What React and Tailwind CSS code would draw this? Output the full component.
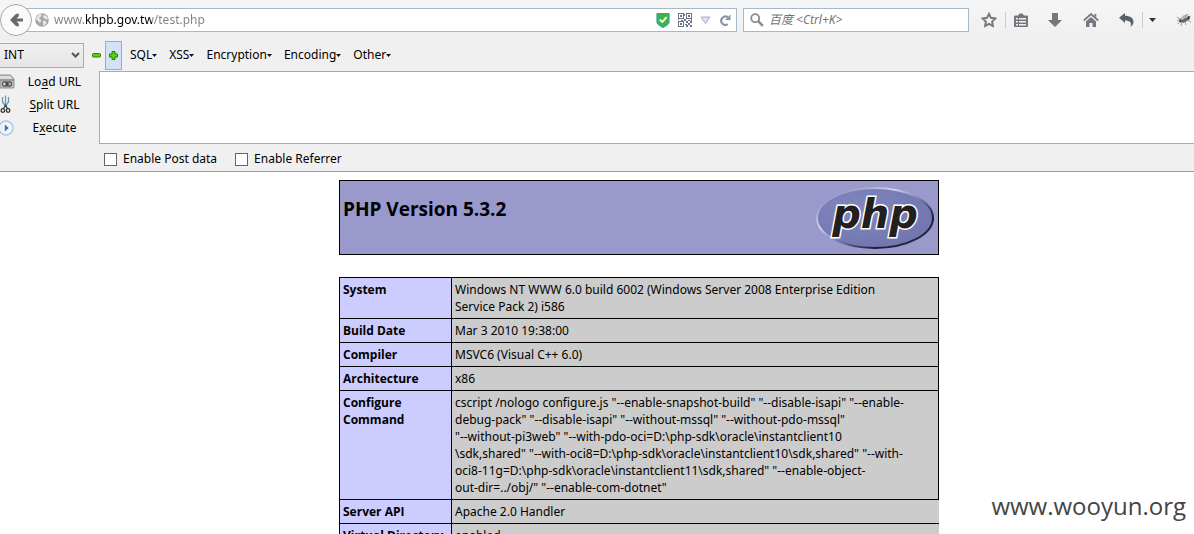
import React from "react";

function BackArrow() {
  return (
    <svg width="15" height="14" viewBox="0 0 15 14" aria-hidden="true">
      <path d="M1 7 7.2.8h2.6v2.4L7.6 5.4H14v3.2H7.6l2.2 2.2v2.4H7.2Z" fill="#666a70" />
    </svg>
  );
}

function GlobeIcon() {
  return (
    <svg width="14" height="14" viewBox="0 0 14 14" aria-hidden="true">
      <circle cx="7" cy="7" r="6.8" fill="#a6a6a6" />
      <path d="M2 3.4 4.6 1l2 .6-.4 1.8-1.6.8-.4 1.6 1.8.8.2 2L4.6 10l-1.2-2L1 6.6ZM8.6 2l3 1 1.4 3-1.6.4-1.8-.8L8 4.8ZM8 7.6l2.6.4 1 1.4-1.8 2.8-1.6.2Z" fill="#e9e9e9" />
    </svg>
  );
}

function ShieldIcon() {
  return (
    <svg width="14" height="15" viewBox="0 0 14 16" aria-hidden="true">
      <path d="M.5.5h13v9c0 2.600-3.500 4.500-6.500 6-3-1.500-6.500-3.400-6.500-6Z" fill="#3fb549" stroke="#2a9db5" />
      <path d="M3.600 7 6.200 9.600l4.600-5.200" fill="none" stroke="#fff" strokeWidth="1.900" />
    </svg>
  );
}

function QrIcon() {
  return (
    <svg width="14" height="14" viewBox="0 0 14 14" fill="#697484" shapeRendering="crispEdges" aria-hidden="true">
      <path fillRule="evenodd" d="M0 0h6v6H0ZM1 1v4h4V1ZM8 0h6v6H8ZM9 1v4h4V1ZM0 8h6v6H0ZM1 9v4h4V9Z" />
      <path d="M2 2h2v2H2zM10 2h2v2h-2zM2 10h2v2H2zM6 1h1v2H6zM0 6h1v1H0zM3 7h2v1H3zM6 6h2v2H6zM10 7h2v1h-2zM13 6h1v2h-1zM8 8h2v2H8zM10 10h2v2h-2zM12 8h2v2h-2zM7 11h2v1H7zM8 12h2v2H8zM12 12h2v2h-2z" />
    </svg>
  );
}

function DropIcon() {
  return (
    <svg width="11" height="9" viewBox="0 0 11 9" aria-hidden="true">
      <path d="M1 1h9L5.500 7.500Z" fill="#dde3ee" stroke="#a3adbf" />
    </svg>
  );
}

function ReloadIcon() {
  return (
    <svg width="12" height="13" viewBox="0 0 12 13" aria-hidden="true">
      <path d="M8.800 3.200A4.200 4.200 0 1 0 8.800 10.200" fill="none" stroke="#8a96a6" strokeWidth="2.200" />
      <path d="M11.500 .5V6H6Z" fill="#8a96a6" />
    </svg>
  );
}

function SearchIcon() {
  return (
    <svg width="14" height="14" viewBox="0 0 14 14" fill="none" stroke="#8b8b8b" aria-hidden="true">
      <circle cx="5.200" cy="5.200" r="4" strokeWidth="1.800" />
      <path d="m8.200 8.200 4.600 4.600" strokeWidth="2.600" />
    </svg>
  );
}

function StarIcon() {
  return (
    <svg width="16" height="16" viewBox="0 0 16 16" aria-hidden="true">
      <path d="m8 1.800 1.900 4 4.500.600-3.300 3.100.800 4.500L8 11.800 4.100 14l.8-4.500L1.600 6.400l4.500-.6Z" fill="none" stroke="#74787e" strokeWidth="1.900" />
    </svg>
  );
}

function ListIcon() {
  return (
    <svg width="14" height="15" viewBox="0 0 14 15" aria-hidden="true">
      <path d="M4 2.500 5.500.5h3L10 2.500h3a1 1 0 0 1 1 1V13a1 1 0 0 1-1 1H1a1 1 0 0 1-1-1V3.500a1 1 0 0 1 1-1Z" fill="#74787e" />
      <path d="M2 5h2v1.500H2zM5 5h7v1.500H5zM2 8h2v1.500H2zM5 8h7v1.500H5zM2 11h2v1.500H2zM5 11h7v1.500H5z" fill="#f1f1f1" />
    </svg>
  );
}

function DownloadIcon() {
  return (
    <svg width="14" height="14" viewBox="0 0 14 14" aria-hidden="true">
      <path d="M4 0h6v7h4L7 14 0 7h4Z" fill="#74787e" />
    </svg>
  );
}

function HomeIcon() {
  return (
    <svg width="16" height="14" viewBox="0 0 16 14" aria-hidden="true">
      <path d="M.8 7.500 8 1l7.200 6.500" fill="none" stroke="#74787e" strokeWidth="1.700" />
      <path d="M11.500 1h1.800v3.500l-1.800-1.600ZM8 4l5 4.500V14H9.500v-4h-3v4H3V8.500Z" fill="#74787e" />
    </svg>
  );
}

function UndoIcon() {
  return (
    <svg width="15" height="14" viewBox="0 0 15 14" aria-hidden="true">
      <path d="M0 4.800 6 0v2.800c5 0 8.500 2.200 8.500 6 0 2.400-1.500 4.200-3.500 5.200.8-1.200 1-2 1-3 0-2.400-2.500-3.600-6-3.600V10Z" fill="#566270" />
    </svg>
  );
}

function FlyIcon() {
  return (
    <svg width="16" height="14" viewBox="0 0 16 14" aria-hidden="true">
      <path d="m3 6 5-4 5-1-2 3-5 4Z" fill="#b9b9b9" />
      <path d="m5 8 4-3 4-.5 1 1.500-3 2-4 2Z" fill="#666" />
      <path d="m1 4 3 2-3 2m3 0-2 3m4-2-1 4m4-4 1 3m1-5 4 2M9 4l2-3m1 3 3-1" fill="none" stroke="#8a8a8a" strokeWidth=".8" />
      <circle cx="4.500" cy="8" r="1.400" fill="#444" />
      <circle cx="12.500" cy="4.600" r="1.300" fill="#333" />
    </svg>
  );
}

function LoadIcon() {
  return (
    <svg width="15" height="15" viewBox="0 0 15 15" aria-hidden="true">
      <path d="M0 1h10.500L14 5v8a1 1 0 0 1-1 1H0Z" fill="#bdbdbd" stroke="#8f8f8f" />
      <path d="M0 2h10l2.500 3H0Z" fill="#dcdcdc" />
      <path d="M0 6h14" stroke="#777" />
      <rect x="2.500" y="8" width="5" height="4" rx="1.500" fill="#ddd" stroke="#555" strokeWidth="1.300" />
      <rect x="6.500" y="8" width="5" height="4" rx="1.500" fill="none" stroke="#555" strokeWidth="1.300" />
      <path d="M5 10h4" stroke="#444" strokeWidth="1.200" />
    </svg>
  );
}

function ScissorsIcon() {
  return (
    <svg width="11" height="19" viewBox="0 0 11 19" fill="none" aria-hidden="true">
      <path d="M2.500 2v5L5 10.500M8.500 2v5L6 10.500M5.500.500V11" stroke="#6f98ad" strokeWidth="1.300" />
      <circle cx="2.900" cy="15.500" r="1.800" stroke="#333" strokeWidth="1.300" />
      <circle cx="8.100" cy="15.500" r="1.800" stroke="#333" strokeWidth="1.300" />
      <path d="m3.500 13.500 2-3 2 3" stroke="#333" strokeWidth="1.300" />
    </svg>
  );
}

function ExecuteIcon() {
  return (
    <svg width="14" height="16" viewBox="1 0 14 16" aria-hidden="true">
      <circle cx="7" cy="8" r="7" fill="#eef4fc" stroke="#b3c5e4" strokeWidth="1.500" />
      <path d="M5.800 4.500 9.500 8l-3.700 3.500Z" fill="#2f6cb5" />
    </svg>
  );
}

function Caret() {
  return (
    <svg width="5" height="3" viewBox="0 0 5 3" aria-hidden="true">
      <path d="M0 0h5L2.500 3Z" fill="#111" />
    </svg>
  );
}

function PhpLogo() {
  return (
    <svg width="120" height="67" viewBox="0 0 120 67" role="img" aria-label="PHP logo">
      <defs>
        <linearGradient id="rim" x1="0" y1="0" x2="1" y2="1">
          <stop offset="0.150" stopColor="#9a9ccc" />
          <stop offset="0.350" stopColor="#d0d2ea" />
          <stop offset="0.550" stopColor="#6d71a8" />
          <stop offset="0.750" stopColor="#1d1d30" />
          <stop offset="1" stopColor="#33365c" />
        </linearGradient>
        <radialGradient id="face" cx="0.350" cy="0.350" r="0.800">
          <stop offset="0" stopColor="#8286be" />
          <stop offset="1" stopColor="#6f74ae" />
        </radialGradient>
      </defs>
      <ellipse cx="60" cy="33" rx="58" ry="30" fill="url(#face)" stroke="url(#rim)" strokeWidth="2" />
      <text
        x="60"
        y="43"
        textAnchor="middle"
        fontFamily="DejaVu Sans"
        fontSize="40"
        fontWeight="700"
        fontStyle="italic"
        fill="#231f20"
        stroke="#fff"
        strokeWidth="3"
        paintOrder="stroke"
      >
        php
      </text>
    </svg>
  );
}

const menus = ["SQL", "XSS", "Encryption", "Encoding", "Other"];

const actions = [
  { icon: <LoadIcon />, before: "Lo", key: "a", after: "d URL" },
  { icon: <ScissorsIcon />, before: "", key: "S", after: "plit URL" },
  { icon: <ExecuteIcon />, before: "E", key: "x", after: "ecute" },
];

const rows = [
  { name: ["System"], lines: ["Windows NT WWW 6.0 build 6002 (Windows Server 2008 Enterprise Edition", "Service Pack 2) i586"] },
  { name: ["Build Date"], lines: ["Mar 3 2010 19:38:00"] },
  { name: ["Compiler"], lines: ["MSVC6 (Visual C++ 6.0)"] },
  { name: ["Architecture"], lines: ["x86"] },
  {
    name: ["Configure", "Command"],
    lines: [
      'cscript /nologo configure.js "--enable-snapshot-build" "--disable-isapi" "--enable-',
      'debug-pack" "--disable-isapi" "--without-mssql" "--without-pdo-mssql"',
      '"--without-pi3web" "--with-pdo-oci=D:\\php-sdk\\oracle\\instantclient10',
      '\\sdk,shared" "--with-oci8=D:\\php-sdk\\oracle\\instantclient10\\sdk,shared" "--with-',
      'oci8-11g=D:\\php-sdk\\oracle\\instantclient11\\sdk,shared" "--enable-object-',
      'out-dir=../obj/" "--enable-com-dotnet"',
    ],
  },
  { name: ["Server API"], lines: ["Apache 2.0 Handler"], open: true },
  { name: ["Virtual Directory"], lines: ["enabled"], open: true },
];

function NavBar() {
  return (
    <header className="flex h-10 items-center bg-linear-to-b from-[#f6f6f6] to-[#efefef] pr-[2px]">
      <button aria-label="Back" className="z-10 flex size-8 shrink-0 items-center justify-center rounded-full border border-[#a9a9a9] bg-[#fafafa]">
        <BackArrow />
      </button>
      <div className="-ml-4 flex h-6 flex-1 items-center border border-[#a9b7c9] bg-white pr-[5px] pl-[18px]">
        <GlobeIcon />
        <input
          aria-label="Address"
          defaultValue="www.khpb.gov.tw/test.php"
          className="ml-[5px] min-w-0 flex-1 bg-[linear-gradient(90deg,#808080_31px,#000_31px,#000_98px,#808080_98px)] bg-clip-text text-xs text-transparent outline-none"
        />
        <div className="flex items-center gap-2">
          <button aria-label="Site safety"><ShieldIcon /></button>
          <button aria-label="QR code"><QrIcon /></button>
          <button aria-label="History"><DropIcon /></button>
          <button aria-label="Reload"><ReloadIcon /></button>
        </div>
      </div>
      <div className="ml-[6px] flex h-6 w-[226px] items-center gap-[5px] border border-[#a9b7c9] bg-white pl-[6px]">
        <SearchIcon />
        <input
          aria-label="Search"
          placeholder="百度 <Ctrl+K>"
          className="min-w-0 flex-1 text-xs italic outline-none placeholder:text-[#757575]"
        />
      </div>
      <div className="flex h-6 items-center pl-3">
        <button aria-label="Bookmark" className="pr-2"><StarIcon /></button>
        <span className="h-4 w-px bg-[#c3cdd9]" />
        <button aria-label="Bookmarks list" className="pl-2"><ListIcon /></button>
        <button aria-label="Downloads" className="pl-5"><DownloadIcon /></button>
        <button aria-label="Home" className="pl-[21px]"><HomeIcon /></button>
        <button aria-label="Undo" className="pr-2 pl-5"><UndoIcon /></button>
        <span className="h-4 w-px bg-[#c3cdd9]" />
        <button aria-label="Undo list" className="pl-[6px]">
          <svg width="7" height="4" viewBox="0 0 7 4" aria-hidden="true"><path d="M0 0h7L3.500 4Z" fill="#333" /></svg>
        </button>
        <button aria-label="Fly" className="pl-5"><FlyIcon /></button>
      </div>
    </header>
  );
}

function HackBar() {
  return (
    <section className="border-b border-[#9c9c9c] bg-[#f0f0f0] text-xs">
      <div className="flex h-[30px] items-center">
        <div className="grid h-[25px] w-[84px] items-center">
          <select
            aria-label="Type"
            className="col-start-1 row-start-1 h-full w-full appearance-none border border-l-0 border-[#acacac] bg-linear-to-b from-[#f0f0f0] to-[#e6e6e6] pl-1"
          >
            <option>INT</option>
          </select>
          <svg className="pointer-events-none col-start-1 row-start-1 mr-1 justify-self-end" width="9" height="6" viewBox="0 0 9 6" aria-hidden="true">
            <path d="m1 1 3.500 3.500L8 1" fill="none" stroke="#555" strokeWidth="2" />
          </svg>
        </div>
        <button aria-label="Decrease" className="px-2">
          <svg width="9" height="5" viewBox="0 0 9 5" aria-hidden="true">
            <rect x=".5" y=".5" width="8" height="3.500" rx="1" fill="#5bd012" stroke="#2e7d0c" />
          </svg>
        </button>
        <button aria-label="Increase" className="-ml-1 flex h-[29px] w-[17px] items-center justify-center border border-[#7eb4ea] bg-[#d1e3f5]">
          <svg width="9" height="9" viewBox="0 0 9 9" className="shrink-0" aria-hidden="true">
            <path d="M3 .5h3V3h2.500v3H6v2.500H3V6H.5V3H3Z" fill="#5bd012" stroke="#2e7d0c" />
          </svg>
        </button>
        <nav className="flex gap-3 pl-2">
          {menus.map((m) => (
            <button key={m} className="flex items-center">
              {m}
              <Caret />
            </button>
          ))}
        </nav>
      </div>
      <div className="flex">
        <div className="flex w-[99px] shrink-0 flex-col">
          {actions.map((a) => (
            <button key={a.key} className="flex h-[23px] items-center">
              <span className="flex w-4 shrink-0">{a.icon}</span>
              <span className="flex-1 pr-[6px]">
                {a.before}
                <u className="underline-offset-2">{a.key}</u>
                {a.after}
              </span>
            </button>
          ))}
        </div>
        <div className="flex-1">
          <textarea aria-label="URL" className="mt-px block h-[73px] w-full resize-none border border-r-0 border-[#ababab] bg-white outline-none" />
          <div className="flex h-[27px] items-center gap-[18px] pt-[3px] pl-[5px]">
            {["Enable Post data", "Enable Referrer"].map((t) => (
              <label key={t} className="flex items-center gap-[6px]">
                <input type="checkbox" className="size-[13px] appearance-none border border-[#666] bg-white checked:bg-[#666]" />
                {t}
              </label>
            ))}
          </div>
        </div>
      </div>
    </section>
  );
}

function Lines({ items }) {
  return items.map((l) => (
    <span key={l} className="block whitespace-nowrap">{l}</span>
  ));
}

function PhpInfo() {
  return (
    <main className="pt-2 pl-[84px]">
      <div className="mx-auto w-[600px]">
        <div className="flex h-[75px] items-start justify-between border border-black bg-[#9999cc] pt-[4px] pr-[3px] pl-[3px]">
          <h1 className="pt-[10px] font-['Open_Sans',sans-serif] text-[19px] leading-7 font-bold">PHP Version 5.3.2</h1>
          <PhpLogo />
        </div>
        <table className="mt-[22px] w-full table-fixed border-collapse text-xs leading-[17px]">
          <colgroup>
            <col className="w-[112px]" />
            <col />
          </colgroup>
          <tbody>
            {rows.map((r) => (
              <tr key={r.name[0]}>
                <th scope="row" className="border border-black bg-[#ccccff] p-[3px] text-left align-top font-['Open_Sans',sans-serif] font-bold">
                  <Lines items={r.name} />
                </th>
                <td className={r.open ? "border-y border-l border-black bg-[#cccccc] p-[3px] align-top" : "border border-black bg-[#cccccc] p-[3px] align-top"}>
                  <Lines items={r.lines} />
                </td>
              </tr>
            ))}
          </tbody>
        </table>
      </div>
    </main>
  );
}

export default function App() {
  return (
    <div className="relative h-screen overflow-hidden bg-white font-['Noto_Sans','Noto_Sans_CJK_SC',sans-serif] text-black">
      <NavBar />
      <HackBar />
      <PhpInfo />
      <p className="absolute right-2 bottom-2 font-['Open_Sans',sans-serif] text-2xl leading-10 text-[#444]">www.wooyun.org</p>
    </div>
  );
}
